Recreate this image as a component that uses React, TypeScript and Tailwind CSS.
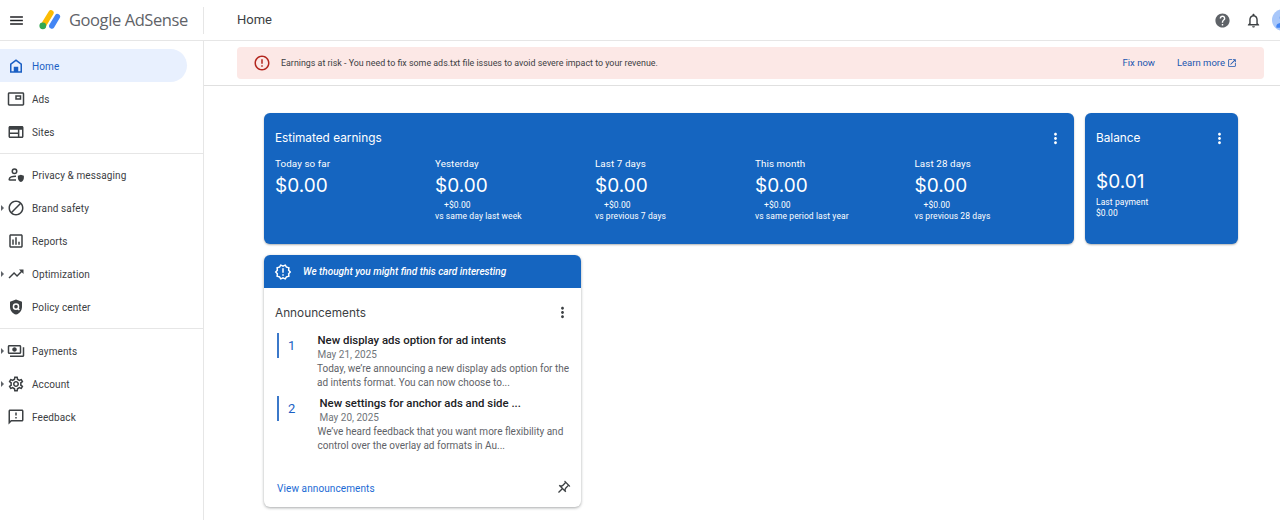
import React from 'react';
import {
  MdMenu,
  MdHelp,
  MdOutlineNotifications,
  MdPerson,
  MdOutlinePictureInPicture,
  MdOutlineWeb,
  MdOutlineBlock,
  MdOutlineAssessment,
  MdTrendingUp,
  MdOutlinePayments,
  MdOutlineSettings,
  MdOutlineFeedback,
  MdMoreVert,
  MdErrorOutline,
  MdOutlineOpenInNew,
  MdOutlinePushPin,
  MdOutlineNewReleases,
} from 'react-icons/md';

const HomeIcon = ({ className }: { className?: string }) => (
  <svg viewBox="0 0 24 24" className={className} fill="currentColor">
    <path d="M12 3L4 9v12h16V9l-8-6zm6 16h-3v-6H9v6H6v-9l6-4.5 6 4.5v9z" />
  </svg>
);

const PrivacyIcon = ({ className }: { className?: string }) => (
  <svg viewBox="0 0 24 24" className={className}>
    <circle cx="10" cy="7" r="3" fill="none" stroke="currentColor" strokeWidth="2" />
    <path d="M3 19v-1.5C3 15 7 13.5 12 13.6M3 18.5h9" fill="none" stroke="currentColor" strokeWidth="2" />
    <path d="M18.5 11.5l4 1.5v3c0 2.5-1.7 4.6-4 5.4-2.3-.8-4-2.9-4-5.4v-3z" fill="currentColor" />
  </svg>
);

const PolicyIcon = ({ className }: { className?: string }) => (
  <svg viewBox="0 0 24 24" className={className}>
    <path d="M12 2L4 5v6.5c0 5 3.4 9.2 8 10.5 4.6-1.3 8-5.5 8-10.5V5z" fill="currentColor" />
    <circle cx="12" cy="11.5" r="3.4" fill="none" stroke="#fff" strokeWidth="2" />
    <path d="M14.5 14l2 2" stroke="#fff" strokeWidth="2" />
  </svg>
);

const Logo = () => (
  <svg viewBox="0 0 24 20" className="h-[20px] w-[24px]">
    <path d="M14 2.8L6 16" stroke="#fbbc04" strokeWidth="5.4" strokeLinecap="round" />
    <path d="M20.4 6.6L14.8 16" stroke="#4285f4" strokeWidth="5.4" strokeLinecap="round" />
    <circle cx="5.8" cy="15.8" r="3.4" fill="#34a853" />
  </svg>
);

type NavItem = {
  label: string;
  icon: React.ComponentType<{ className?: string }>;
  caret?: boolean;
  active?: boolean;
};

const groupOne: NavItem[] = [
  { label: 'Home', icon: HomeIcon, active: true },
  { label: 'Ads', icon: MdOutlinePictureInPicture },
  { label: 'Sites', icon: MdOutlineWeb },
];

const groupTwo: NavItem[] = [
  { label: 'Privacy & messaging', icon: PrivacyIcon },
  { label: 'Brand safety', icon: MdOutlineBlock, caret: true },
  { label: 'Reports', icon: MdOutlineAssessment },
  { label: 'Optimization', icon: MdTrendingUp, caret: true },
  { label: 'Policy center', icon: PolicyIcon },
];

const groupThree: NavItem[] = [
  { label: 'Payments', icon: MdOutlinePayments, caret: true },
  { label: 'Account', icon: MdOutlineSettings, caret: true },
  { label: 'Feedback', icon: MdOutlineFeedback },
];

const NavRow = ({ item }: { item: NavItem }) => {
  const Icon = item.icon;
  return (
    <div
      className={`relative flex h-[33px] w-[187px] items-center rounded-r-full pl-[7px] ${
        item.active ? 'bg-[#e8f0fe] text-[#1a5fc4]' : 'text-[#3c4043]'
      }`}
    >
      {item.caret && (
        <span className="absolute left-[1px] top-[14px] h-0 w-0 border-y-[3px] border-l-[3px] border-y-transparent border-l-[#5f6368]" />
      )}
      <Icon className="h-[18px] w-[18px] shrink-0" />
      <span className="ml-[7px] pt-[1px] text-[10px] tracking-[0.01em]">{item.label}</span>
    </div>
  );
};

const periods = [
  { label: 'Today so far', note: '' },
  { label: 'Yesterday', note: 'vs same day last week' },
  { label: 'Last 7 days', note: 'vs previous 7 days' },
  { label: 'This month', note: 'vs same period last year' },
  { label: 'Last 28 days', note: 'vs previous 28 days' },
];

const announcements = [
  {
    n: 1,
    title: 'New display ads option for ad intents',
    date: 'May 21, 2025',
    lines: ['Today, we’re announcing a new display ads option for the', 'ad intents format. You can now choose to...'],
    offset: 'pl-[18.5px]',
    bodyOffset: '-ml-[0.5px]',
  },
  {
    n: 2,
    title: 'New settings for anchor ads and side ...',
    date: 'May 20, 2025',
    lines: ['We’ve heard feedback that you want more flexibility and', 'control over the overlay ad formats in Au...'],
    offset: 'pl-[20.5px]',
    bodyOffset: '-ml-[2px]',
  },
];

export default function App() {
  return (
    <div className="h-[520px] w-[1280px] overflow-hidden bg-white font-['Roboto',sans-serif]">
      {/* Top bar */}
      <header className="flex h-[41px] items-center border-b border-[#e6e6e6]">
        <div className="flex h-full w-[203px] shrink-0 items-center">
          <MdMenu className="ml-[8px] h-[17px] w-[17px] text-[#202124]" />
          <div className="ml-[12px]">
            <Logo />
          </div>
          <span className="ml-[8px] font-['Open_Sans',sans-serif] text-[16.5px] tracking-[-0.025em] text-[#5f6368]">
            Google AdSense
          </span>
        </div>
        <div className="h-[27px] w-px bg-[#e6e6e6]" />
        <span className="ml-[33px] text-[13px] text-[#3c4043]">Home</span>
        <div className="ml-auto flex items-center">
          <MdHelp className="h-[17px] w-[17px] text-[#5f6368]" />
          <MdOutlineNotifications className="ml-[14px] h-[17px] w-[17px] text-[#3c4043]" />
          <div className="relative ml-[10px] -mr-[14px] flex h-[22px] w-[22px] shrink-0 items-end justify-center overflow-hidden rounded-full bg-[#a8c7fa]">
            <MdPerson className="h-[20px] w-[20px] text-[#4285f4]" />
          </div>
        </div>
      </header>

      <div className="flex h-[479px]">
        {/* Sidebar */}
        <aside className="w-[204px] shrink-0 border-r border-[#e6e6e6] pt-[8px]">
          {groupOne.map((item) => (
            <NavRow key={item.label} item={item} />
          ))}
          <div className="mb-[4px] mt-[5px] border-t border-[#e6e6e6]" />
          {groupTwo.map((item) => (
            <NavRow key={item.label} item={item} />
          ))}
          <div className="mb-[5px] mt-[5px] border-t border-[#e6e6e6]" />
          {groupThree.map((item) => (
            <NavRow key={item.label} item={item} />
          ))}
        </aside>

        <main className="min-w-0 flex-1">
          {/* Alert banner */}
          <div className="h-[45px] border-b border-[#e0e0e0] pl-[33px] pr-[16px] pt-[6px]">
            <div className="flex h-[32px] items-center rounded-[4px] bg-[#fce8e6]">
              <MdErrorOutline className="ml-[16px] h-[18px] w-[18px] text-[#b3261e]" />
              <span className="ml-[10px] pt-[1px] text-[8.9px] text-[#3c4043]">
                Earnings at risk - You need to fix some ads.txt file issues to avoid severe impact to your revenue.
              </span>
              <span className="ml-auto pt-[1px] text-[9.5px] text-[#1a56b0]">Fix now</span>
              <span className="ml-[22px] pt-[1px] text-[9.5px] text-[#1a56b0]">Learn more</span>
              <MdOutlineOpenInNew className="ml-[2px] mr-[27px] h-[10px] w-[10px] text-[#1a56b0]" />
            </div>
          </div>

          <div className="pl-[60px] pr-[42px] pt-[27px]">
            <div className="flex gap-[11px]">
              {/* Estimated earnings */}
              <section className="h-[131px] w-[810px] rounded-[6px] bg-[#1565c0] px-[11px] pt-[15px] text-white shadow-[0_1px_2px_rgba(60,64,67,0.4)]">
                <div className="flex h-[20px] items-center justify-between">
                  <h2 className="pt-[2px] font-['Inter',sans-serif] text-[11.8px]">Estimated earnings</h2>
                  <MdMoreVert className="-mr-[1px] h-[17px] w-[17px]" />
                </div>
                <div className="mt-[9px] flex">
                  {periods.map((p, i) => (
                    <div key={p.label} className={`w-[160px] shrink-0 ${i === 4 ? '-ml-[0.5px]' : ''}`}>
                      <div className="text-[9.8px] leading-[14px] tracking-[0.01em]">{p.label}</div>
                      <div className="mt-[2px] font-['Inter',sans-serif] text-[19px] leading-[26px]">$0.00</div>
                      {p.note && (
                        <div className="mt-[1px] text-[8.5px] leading-[11px] tracking-[0.01em]">
                          <div className="pl-[9px]">+$0.00</div>
                          <div>{p.note}</div>
                        </div>
                      )}
                    </div>
                  ))}
                </div>
              </section>

              {/* Balance */}
              <section className="h-[131px] w-[153px] rounded-[6px] bg-[#1565c0] px-[11px] pt-[15px] text-white shadow-[0_1px_2px_rgba(60,64,67,0.4)]">
                <div className="flex h-[20px] items-center justify-between">
                  <h2 className="pt-[2px] font-['Inter',sans-serif] text-[11.8px]">Balance</h2>
                  <MdMoreVert className="-mr-[1px] h-[17px] w-[17px]" />
                </div>
                <div className="mt-[21px] font-['Inter',sans-serif] text-[19px] leading-[26px]">$0.01</div>
                <div className="mt-[2px] text-[8.5px] leading-[11px] tracking-[0.01em]">
                  <div>Last payment</div>
                  <div>$0.00</div>
                </div>
              </section>
            </div>

            {/* Announcements */}
            <section className="mt-[11px] flex h-[252px] w-[317px] flex-col overflow-hidden rounded-[6px] bg-white shadow-[0_1px_3px_rgba(60,64,67,0.45)]">
              <div className="flex h-[33px] shrink-0 items-center bg-[#1565c0] text-white">
                <MdOutlineNewReleases className="ml-[10px] h-[18px] w-[18px]" />
                <span className="ml-[11px] text-[10px] font-medium italic">We thought you might find this card interesting</span>
              </div>
              <div className="mt-[16px] flex h-[17px] items-center justify-between pl-[11px] pr-[10px]">
                <h2 className="pt-[2px] font-['Inter',sans-serif] text-[11.8px] text-[#3c4043]">Announcements</h2>
                <MdMoreVert className="h-[17px] w-[17px] text-[#3c4043]" />
              </div>
              <div className="mt-[12px] flex flex-col gap-[6px]">
                {announcements.map((a) => (
                  <div key={a.n} className="flex pl-[13px]">
                    <div className="flex h-[25px] w-[22px] shrink-0 items-center border-l-2 border-[#3b78c9] pl-[9px] text-[13px] text-[#1a5fc4]">
                      {a.n}
                    </div>
                    <div className={`min-w-0 ${a.offset}`}>
                      <div className="text-[11.4px] font-medium leading-[14px] text-[#202124]">{a.title}</div>
                      <div className="mt-[1px] text-[10px] leading-[14px] text-[#70757a]">{a.date}</div>
                      {a.lines.map((line) => (
                        <div key={line} className={`${a.bodyOffset} text-[10px] leading-[14px] text-[#5f6368]`}>
                          {line}
                        </div>
                      ))}
                    </div>
                  </div>
                ))}
              </div>
              <div className="mt-auto flex items-center justify-between pb-[11px] pl-[13px] pr-[10px]">
                <span className="text-[10px] tracking-[0.01em] text-[#1a6ad4]">View announcements</span>
                <MdOutlinePushPin className="h-[16px] w-[16px] rotate-45 text-[#3c4043]" />
              </div>
            </section>
          </div>
        </main>
      </div>
    </div>
  );
}
